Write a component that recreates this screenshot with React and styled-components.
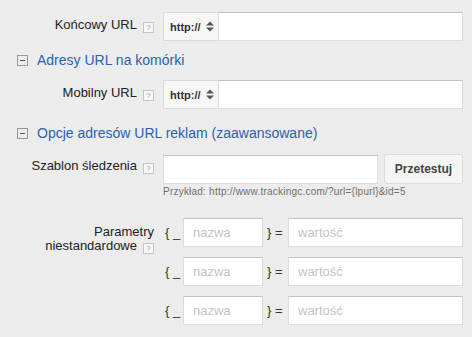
import styled, { createGlobalStyle } from 'styled-components'

const GlobalStyle = createGlobalStyle`
  body {
    margin: 0;
    background: #ececec;
    font-family: "Liberation Sans", Arial, sans-serif;
  }
`;

const Page = styled.div`
  width: 472px;
  height: 337px;
  overflow: hidden;
  padding: 12px 9px 0 0;
  box-sizing: border-box;
`;

const FieldRow = styled.div`
  display: grid;
  grid-template-columns: 154px minmax(0, 1fr);
  column-gap: 9px;
  align-items: start;
  margin-top: ${({ $mt }) => $mt || 0}px;
`;

const Label = styled.div`
  text-align: right;
  font-size: 13px;
  line-height: 14px;
  color: #222;
  padding-top: ${({ $pt }) => ($pt === undefined ? 6 : $pt)}px;
`;

const Help = styled.span`
  display: inline-block;
  box-sizing: border-box;
  width: 11px;
  height: 11px;
  margin-left: 6px;
  border: 1px solid #c4c4c4;
  background: #f7f7f7;
  color: #9a9a9a;
  font-size: 8px;
  line-height: 9px;
  text-align: center;
  vertical-align: -1px;
`;

const Controls = styled.div`
  display: flex;
  flex-direction: column;
  min-width: 0;
`;

const InputGroup = styled.div`
  display: flex;
  align-items: stretch;
  min-width: 0;
`;

const Select = styled.div`
  display: flex;
  align-items: center;
  justify-content: space-between;
  box-sizing: border-box;
  width: 55px;
  height: 29px;
  padding: 0 4px 0 6px;
  background: #f6f6f6;
  border: 1px solid #dadada;
  border-right: none;
  font-size: 11px;
  font-weight: bold;
  color: #333;
`;

const TextInput = styled.input`
  box-sizing: border-box;
  height: 29px;
  width: ${({ $w }) => ($w ? `${$w}px` : '0')};
  flex: ${({ $w }) => ($w ? 'none' : '1 1 0')};
  min-width: 0;
  margin: 0;
  padding: 0 9px;
  background: #fff;
  border: 1px solid #dcdcdc;
  border-top-color: #c2c2c2;
  border-radius: 0;
  font-family: inherit;
  font-size: 13px;
  color: #222;
  outline: none;

  &::placeholder {
    color: #c4c4c4;
  }
`;

const Button = styled.button`
  box-sizing: border-box;
  width: 81px;
  height: 30px;
  margin: -1px 0 0 6px;
  background: #f5f5f5;
  border: 1px solid #dcdcdc;
  border-radius: 2px;
  font-family: inherit;
  font-size: 12px;
  font-weight: bold;
  color: #444;
`;

const SectionHeader = styled.div`
  display: flex;
  align-items: center;
  gap: 9px;
  padding-left: 17px;
  margin-top: ${({ $mt }) => $mt}px;
  font-size: 14px;
  line-height: 16px;
  color: #2b61ae;
`;

const Collapse = styled.span`
  position: relative;
  display: inline-block;
  box-sizing: border-box;
  width: 11px;
  height: 11px;
  border: 1px solid #999;

  &::after {
    content: '';
    position: absolute;
    left: 2px;
    right: 2px;
    top: 4px;
    height: 1px;
    background: #555;
  }
`;

const Hint = styled.div`
  margin-top: 2px;
  font-size: 10px;
  line-height: 12px;
  letter-spacing: 0.22px;
  color: #6f6f6f;
`;

const ParamList = styled.div`
  display: flex;
  flex-direction: column;
  gap: 10px;
  min-width: 0;
`;

const ParamRow = styled.div`
  display: flex;
  align-items: center;
  min-width: 0;
`;

const Brace = styled.span`
  flex: none;
  width: ${({ $w }) => $w}px;
  padding-left: ${({ $pl }) => $pl || 0}px;
  box-sizing: border-box;
  font-size: 13px;
  color: #333;
  white-space: pre;
`;

const Spinner = () => (
  <svg width="8" height="11" viewBox="0 0 8 11">
    <path d="M0 4.5 L4 0.5 L8 4.5 Z M0 6.5 L4 10.5 L8 6.5 Z" fill="#555" />
  </svg>
);

const UrlRow = ({ label, mt }) => (
  <FieldRow $mt={mt}>
    <Label>
      {label}
      <Help>?</Help>
    </Label>
    <InputGroup>
      <Select>
        http://
        <Spinner />
      </Select>
      <TextInput />
    </InputGroup>
  </FieldRow>
);

const App = () => {
  const params = [0, 1, 2];

  return (
    <Page>
      <GlobalStyle />
      <UrlRow label="Końcowy URL" />

      <SectionHeader $mt={11}>
        <Collapse />
        Adresy URL na komórki
      </SectionHeader>

      <UrlRow label="Mobilny URL" mt={12} />

      <SectionHeader $mt={16}>
        <Collapse />
        Opcje adresów URL reklam (zaawansowane)
      </SectionHeader>

      <FieldRow $mt={14}>
        <Label $pt={4}>
          Szablon śledzenia
          <Help>?</Help>
        </Label>
        <Controls>
          <InputGroup>
            <TextInput $w={215} />
            <Button>Przetestuj</Button>
          </InputGroup>
          <Hint>Przykład: http://www.trackingc.com/?url={'{lpurl}'}&amp;id=5</Hint>
        </Controls>
      </FieldRow>

      <FieldRow $mt={20}>
        <Label $pt={7}>
          Parametry
          <br />
          niestandardowe
          <Help>?</Help>
        </Label>
        <ParamList>
          {params.map((i) => (
            <ParamRow key={i}>
              <Brace $w={20} $pl={2}>{'{ _'}</Brace>
              <TextInput $w={80} placeholder="nazwa" />
              <Brace $w={25} $pl={4}>{'} ='}</Brace>
              <TextInput placeholder="wartość" />
            </ParamRow>
          ))}
        </ParamList>
      </FieldRow>
    </Page>
  );
};

export default App;
